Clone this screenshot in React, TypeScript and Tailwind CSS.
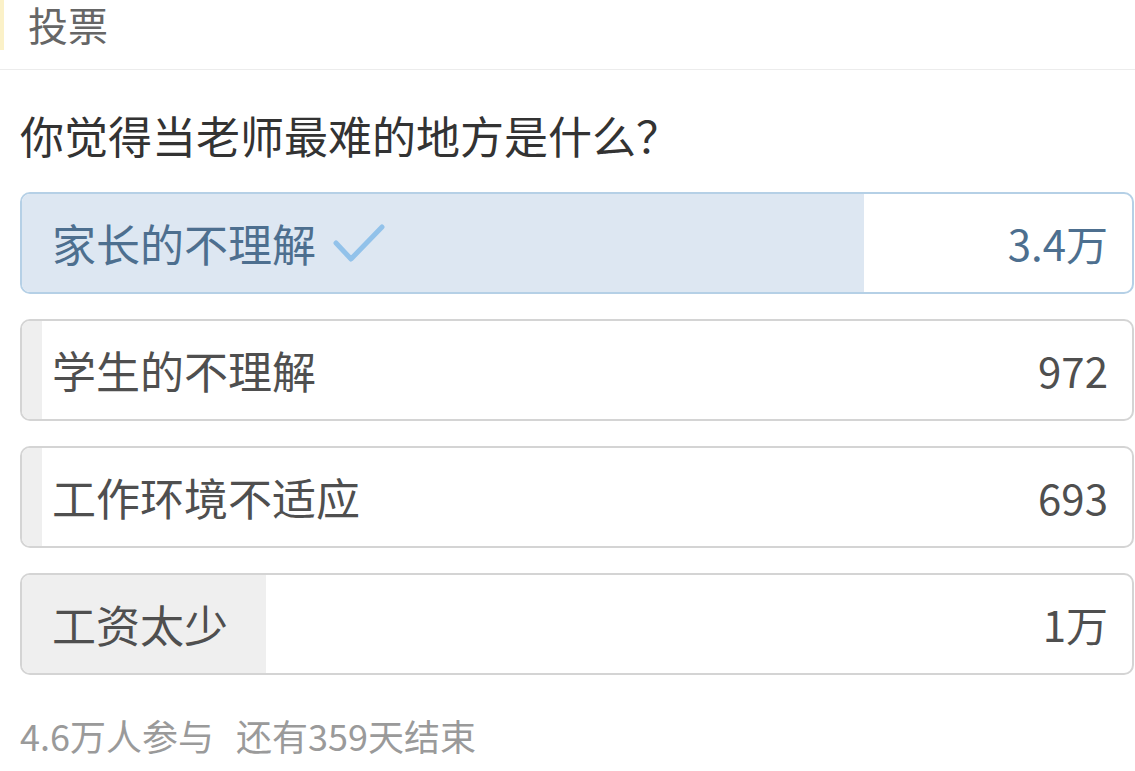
import React from 'react';

interface Option {
  label: string;
  count: string;
  fill: number; // percent of bar width
  selected?: boolean;
}

const options: Option[] = [
  { label: '家长的不理解', count: '3.4万', fill: 75.9, selected: true },
  { label: '学生的不理解', count: '972', fill: 1.8 },
  { label: '工作环境不适应', count: '693', fill: 1.8 },
  { label: '工资太少', count: '1万', fill: 22 },
];

function CheckMark() {
  return (
    <svg width="54" height="44" viewBox="0 0 54 44" className="ml-4 shrink-0">
      <path
        d="M4 22 L19 38 L50 6"
        fill="none"
        stroke="#92c2ea"
        strokeWidth="5"
        strokeLinecap="round"
        strokeLinejoin="round"
      />
    </svg>
  );
}

function PollOption({ option }: { option: Option }) {
  const sel = option.selected;
  return (
    <div
      className={`relative h-[102px] w-[1114px] overflow-hidden rounded-[10px] border-2 ${
        sel ? 'border-[#b5d0e6] bg-white' : 'border-[#d4d4d4] bg-white'
      }`}
    >
      <div
        className={`absolute inset-y-0 left-0 ${sel ? 'bg-[#dde7f2]' : 'bg-[#efefef]'}`}
        style={{ width: `${option.fill}%` }}
      />
      <div className="relative flex h-full items-center justify-between pl-[30px] pr-[24px]">
        <div className="flex items-center">
          <span className={`text-[44px] leading-none ${sel ? 'text-[#4d6f8f]' : 'text-[#4f4f4f]'}`}>
            {option.label}
          </span>
          {sel && <CheckMark />}
        </div>
        <span className={`text-[42px] leading-none ${sel ? 'text-[#4d6f8f]' : 'text-[#4f4f4f]'}`}>
          {option.count}
        </span>
      </div>
    </div>
  );
}

export default function App() {
  return (
    <div
      className="h-[771px] w-[1135px] overflow-hidden bg-white"
      style={{ fontFamily: '"Noto Sans CJK SC", "Noto Sans", sans-serif' }}
    >
      <div className="relative flex h-[70px] items-start border-b border-[#ececec] pl-[28px] pt-[3px]">
        <div className="absolute left-0 top-0 h-[50px] w-[4px] bg-[#fbf1c8]" />
        <span className="text-[40px] leading-[42px] text-[#666666]">投票</span>
      </div>

      <div className="pl-[20px]">
        <h1 className="pt-[40px] pb-[32px] text-[44px] leading-[50px] text-[#333333]">
          你觉得当老师最难的地方是什么？
        </h1>

        <div className="flex flex-col gap-[25px]">
          {options.map(o => (
            <PollOption key={o.label} option={o} />
          ))}
        </div>

        <div className="mt-[42px] flex items-center text-[36px] leading-none text-[#9a9a9a]">
          <span>4.6万人参与</span>
          <span className="ml-[22px]">还有359天结束</span>
        </div>
      </div>
    </div>
  );
}
